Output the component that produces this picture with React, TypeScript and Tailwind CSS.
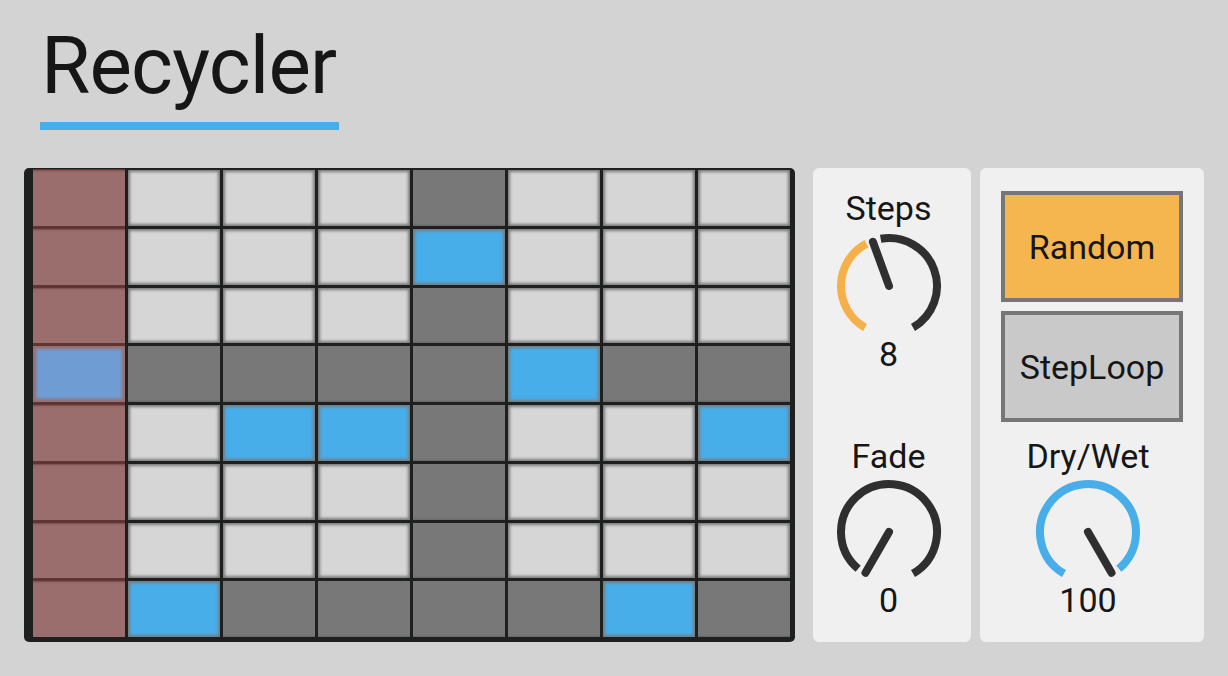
import React from 'react';

type Cell = 'L' | 'B' | 'D';

// columns 1..7 of each row; column 0 sits under the pink overlay
const rows: Cell[][] = [
  ['L', 'L', 'L', 'D', 'L', 'L', 'L'],
  ['L', 'L', 'L', 'B', 'L', 'L', 'L'],
  ['L', 'L', 'L', 'D', 'L', 'L', 'L'],
  ['D', 'D', 'D', 'D', 'B', 'D', 'D'],
  ['L', 'B', 'B', 'D', 'L', 'L', 'B'],
  ['L', 'L', 'L', 'D', 'L', 'L', 'L'],
  ['L', 'L', 'L', 'D', 'L', 'L', 'L'],
  ['B', 'D', 'D', 'D', 'D', 'B', 'D'],
];

const firstCol = [false, false, false, true, false, false, false, false];

function Tile({ kind }: { kind: Cell }) {
  if (kind === 'D') {
    return <div className="bg-[#787878] shadow-[inset_0_-3px_2px_-2px_#666]" />;
  }
  if (kind === 'B') {
    return <div className="bg-[#47aeea] shadow-[inset_0_0_3px_2px_#7a7a7a]" />;
  }
  return <div className="bg-[#d6d6d6] shadow-[inset_0_0_3px_2px_#7a7a7a]" />;
}

function polar(cx: number, cy: number, r: number, deg: number) {
  const rad = ((deg - 90) * Math.PI) / 180;
  return [cx + r * Math.cos(rad), cy + r * Math.sin(rad)];
}

function arc(from: number, to: number) {
  const [x1, y1] = polar(55, 53, 48, from);
  const [x2, y2] = polar(55, 53, 48, to);
  const large = to - from > 180 ? 1 : 0;
  return `M ${x1} ${y1} A 48 48 0 ${large} 1 ${x2} ${y2}`;
}

function Knob({
  arcs,
  pointer,
}: {
  arcs: { from: number; to: number; color: string }[];
  pointer: number;
}) {
  const [px, py] = polar(55, 53, 47, pointer);
  return (
    <svg width="110" height="104" viewBox="0 0 110 104">
      {arcs.map((a, i) => (
        <path key={i} d={arc(a.from, a.to)} fill="none" stroke={a.color} strokeWidth="8" />
      ))}
      <line x1="55" y1="53" x2={px} y2={py} stroke="#2f2f2f" strokeWidth="8" strokeLinecap="round" />
    </svg>
  );
}

function Dial({
  label,
  value,
  arcs,
  pointer,
  gap,
}: {
  label: string;
  value: string;
  arcs: { from: number; to: number; color: string }[];
  pointer: number;
  gap: string;
}) {
  return (
    <div className="flex flex-col items-center">
      <div className="h-[34px] text-[34px] leading-none">{label}</div>
      <div className={gap}>
        <Knob arcs={arcs} pointer={pointer} />
      </div>
      <div className="h-[34px] text-[34px] leading-none">{value}</div>
    </div>
  );
}

export default function App() {
  return (
    <div className="h-[676px] w-[1228px] bg-[#d3d3d3] px-[24px] pt-[26px] font-['Roboto',sans-serif] text-[#161616]">
      <h1 className="ml-[17px] text-[80px] font-normal leading-none tracking-[-0.01em]">Recycler</h1>
      <div className="ml-[16px] mt-[16px] h-[8px] w-[299px] bg-[#47aeea]" />

      <div className="mt-[38px] flex">
        {/* step grid */}
        <div className="flex h-[474px] w-[771px] gap-[3px] rounded-[5px] bg-[#1e1f1f] pb-[5px] pl-[9px] pr-[5px] pt-[2px]">
          <div className="-mt-[1px] flex w-[92px] flex-col gap-[3px] bg-[#5e3534] pt-[1px]">
            {firstCol.map((blue, i) => (
              <div
                key={i}
                className={
                  blue
                    ? 'flex-1 bg-[#6f9cd2] shadow-[inset_0_0_3px_3px_#9a6e6d]'
                    : 'flex-1 bg-[#9a6e6d] shadow-[inset_0_2px_2px_-1px_#7a4d4c]'
                }
              />
            ))}
          </div>
          <div className="grid flex-1 grid-cols-7 grid-rows-8 gap-[3px]">
            {rows.map((row, r) => row.map((c, i) => <Tile key={`${r}-${i}`} kind={c} />))}
          </div>
        </div>

        {/* steps / fade */}
        <div className="ml-[18px] flex h-[474px] w-[158px] flex-col items-center rounded-[6px] bg-[#f0f0f0] pt-[23px]">
          <div className="mr-[7px]">
            <Dial
              label="Steps"
              value="8"
              gap="mt-[8px]"
              pointer={-20}
              arcs={[
                { from: -150, to: -28, color: '#f5b04a' },
                { from: -10, to: 150, color: '#2f2f2f' },
              ]}
            />
          </div>
          <div className="mr-[7px] mt-[68px]">
            <Dial
              label="Fade"
              value="0"
              gap="mt-[6px]"
              pointer={-150}
              arcs={[{ from: -140, to: 150, color: '#2f2f2f' }]}
            />
          </div>
        </div>

        {/* buttons / dry-wet */}
        <div className="ml-[9px] flex h-[474px] w-[224px] flex-col items-center rounded-[6px] bg-[#f0f0f0] pt-[23px]">
          <button
            type="button"
            className="flex h-[111px] w-[182px] items-center justify-center border-4 border-[#767676] bg-[#f6b64f] text-[34px] leading-none"
          >
            Random
          </button>
          <button
            type="button"
            className="mt-[9px] flex h-[111px] w-[182px] items-center justify-center border-4 border-[#767676] bg-[#c9c9c9] text-[34px] leading-none"
          >
            StepLoop
          </button>
          <div className="mr-[8px] mt-[17px]">
            <Dial
              label="Dry/Wet"
              value="100"
              gap="mt-[6px]"
              pointer={150}
              arcs={[{ from: -150, to: 140, color: '#47aeea' }]}
            />
          </div>
        </div>
      </div>
    </div>
  );
}
